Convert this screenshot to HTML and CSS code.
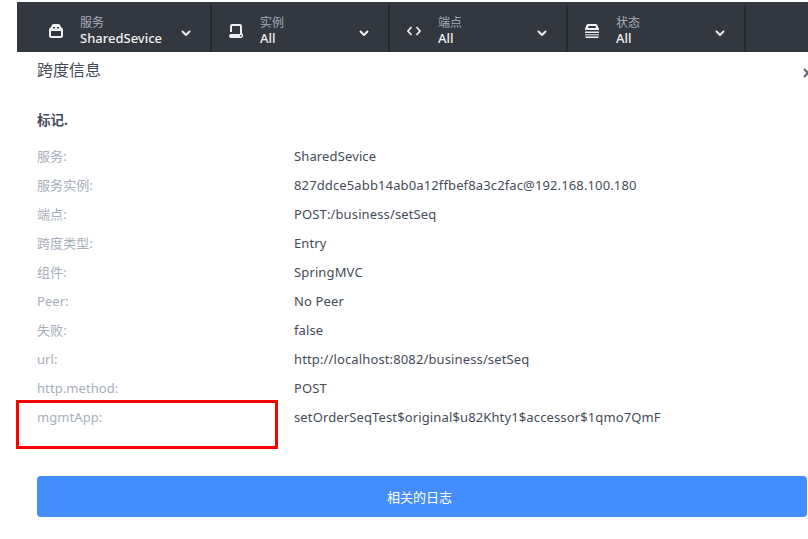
FILE: index.html
```html
<!DOCTYPE html>
<html lang="zh-CN">
<head>
<meta charset="utf-8">
<title>跨度信息</title>
<link rel="stylesheet" href="styles.css">
</head>
<body>
<header class="toolbar">
  <div class="selector">
    <svg class="icon" viewBox="0 0 14 14"><path fill-rule="evenodd" d="M4 0h6l1 1 1 2 2 2v7q0 2-2 2H2q-2 0-2-2V5l2-2 1-2zM4 3v1.500h2V3zM8 3v1.500h2V3zM2 7v5h10V7z"/></svg>
    <div class="labels"><span class="caption">服务</span><span class="choice">SharedSevice</span></div>
    <svg class="chevron" viewBox="0 0 10 6"><path d="M1 1l4 4 4-4"/></svg>
  </div>
  <div class="selector">
    <svg class="icon" viewBox="0 0 14 14"><path fill-rule="evenodd" d="M3 0h8q2 0 2 2v7h-2V2H3v6H1V2q0-2 2-2zM2 10h9V9h1q2 0 2 2v1q0 2-2 2H2q-2 0-2-2t2-2zM11 11v1.500h1.500V11z"/></svg>
    <div class="labels"><span class="caption">实例</span><span class="choice">All</span></div>
    <svg class="chevron" viewBox="0 0 10 6"><path d="M1 1l4 4 4-4"/></svg>
  </div>
  <div class="selector">
    <svg class="icon" viewBox="0 0 14 14"><path class="line" d="M4.500 3L1 7l3.500 4M9.500 3L13 7l-3.500 4"/></svg>
    <div class="labels"><span class="caption">端点</span><span class="choice">All</span></div>
    <svg class="chevron" viewBox="0 0 10 6"><path d="M1 1l4 4 4-4"/></svg>
  </div>
  <div class="selector">
    <svg class="icon" viewBox="0 0 14 14"><path fill-rule="evenodd" d="M3 0h8q1 0 1.300 1L14 5v1H0V5l1.500-4Q2 0 3 0zM3.500 2L3 4h8l-.5-2zM0 7.500h14V9H0z"/><path class="muted" d="M0 10h14v1.500H0z"/><path d="M0 12.500h14L13 14H1z"/></svg>
    <div class="labels"><span class="caption">状态</span><span class="choice">All</span></div>
    <svg class="chevron" viewBox="0 0 10 6"><path d="M1 1l4 4 4-4"/></svg>
  </div>
</header>
<main class="panel">
  <div class="heading">
    <h1>跨度信息</h1>
    <svg class="close" viewBox="0 0 10 10"><path d="M1 1l8 8M9 1l-8 8"/></svg>
  </div>
  <h2>标记.</h2>
  <dl>
    <dt>服务:</dt><dd>SharedSevice</dd>
    <dt>服务实例:</dt><dd>827ddce5abb14ab0a12ffbef8a3c2fac@192.168.100.180</dd>
    <dt>端点:</dt><dd>POST:/business/setSeq</dd>
    <dt>跨度类型:</dt><dd>Entry</dd>
    <dt>组件:</dt><dd>SpringMVC</dd>
    <dt>Peer:</dt><dd>No Peer</dd>
    <dt>失败:</dt><dd>false</dd>
    <dt>url:</dt><dd>http://localhost:8082/business/setSeq</dd>
    <dt>http.method:</dt><dd>POST</dd>
    <dt class="marked">mgmtApp:</dt><dd>setOrderSeqTest$original$u82Khty1$accessor$1qmo7QmF</dd>
  </dl>
  <button type="button">相关的日志</button>
</main>
</body>
</html>
```

FILE: styles.css
```css
*, *::after { box-sizing: border-box; }
body {
  margin: 0;
  height: 539px;
  overflow: hidden;
  background: #fff;
  color: #454c58;
  font: 13px/29px "Noto Sans", "Noto Sans CJK SC", sans-serif;
}
.toolbar {
  display: flex;
  height: 50px;
  margin: 2px 0 0 17px;
  padding: 3px 0 0 15px;
  background: #333840;
}
.selector {
  display: flex;
  flex: none;
  width: 178px;
  padding: 0 19px 0 17px;
  border-right: 2px solid #252a2f;
}
.selector:first-child { width: 180px; }
.icon { flex: none; width: 14px; height: 14px; margin-top: 19px; fill: #efeff1; }
.icon .line { fill: none; stroke: #efeff1; stroke-width: 1.7; }
.icon .muted { fill: #b4b6b9; }
.labels { display: flex; flex-direction: column; margin: 9px 0 0 17px; }
.caption { color: #a5acba; font-size: 12px; line-height: 17px; }
.choice { color: #efeff1; font-size: 13px; line-height: 15px; font-weight: 500; }
.chevron {
  width: 10px;
  height: 6px;
  margin: 25px 0 0 auto;
  fill: none;
  stroke: #efeff1;
  stroke-width: 2;
}
.panel { padding: 0 1px 0 37px; }
.heading { display: flex; justify-content: space-between; height: 53px; }
h1 { margin: 3px 0 0; font-size: 16px; line-height: 30px; font-weight: 400; }
.close { flex: none; width: 10px; height: 10px; margin: 16px -6px 0 0; fill: none; stroke: #5f6369; stroke-width: 2; }
h2 { margin: 0; font-size: 13.5px; line-height: 30px; font-weight: 700; }
dl { display: grid; grid-template-columns: 257px 1fr; margin: 7px 0 0; }
dt { color: #a7aebb; letter-spacing: 0.08px; }
dd { letter-spacing: 0.13px; }
dt, dd { height: 29px; margin: 0; white-space: nowrap; }
.marked { position: relative; }
.marked::after {
  content: "";
  position: absolute;
  left: -21px;
  top: -3px;
  width: 262px;
  height: 49px;
  border: 3px solid #f00;
}
button {
  display: block;
  width: 100%;
  height: 41px;
  margin: 44px 0 0;
  padding: 2px 5px 0 0;
  border: 0;
  border-radius: 4px;
  background: #448dfe;
  color: #fff;
  font: inherit;
}
```
